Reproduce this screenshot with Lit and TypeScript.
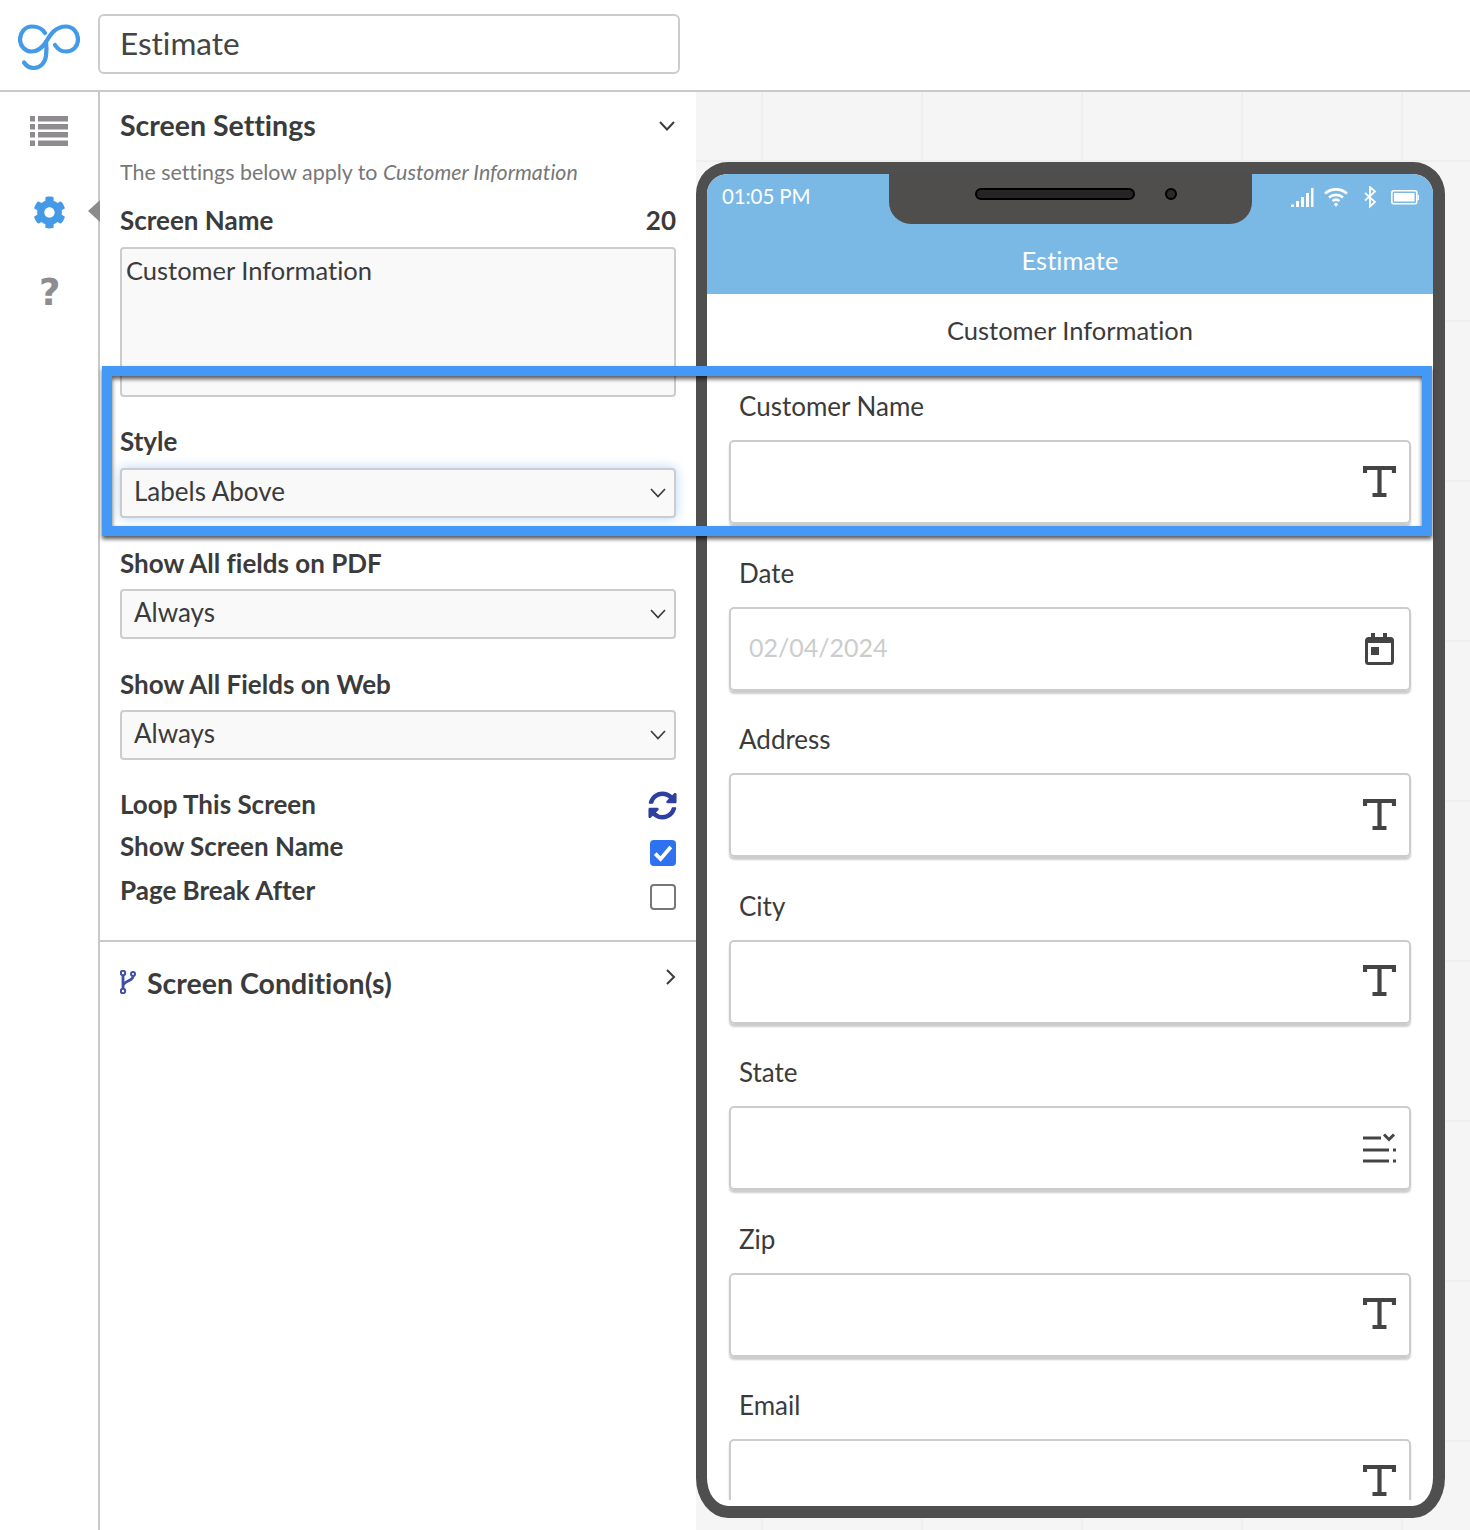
import { LitElement, html, css, svg } from "lit";
import { customElement } from "lit/decorators.js";

const tIcon = svg`<path d="M2 7V2a1.500 1.500 0 0 1 0 0H31V7M16.500 2V28.500M9.500 29H23.500" fill="none" stroke="#444" stroke-width="4.200"/>`;
const icons: Record<string, unknown> = {
  t: html`<svg class="fi" viewBox="0 0 33 33" width="33" height="33">${tIcon}</svg>`,
  date: html`<svg class="fi" viewBox="0 0 33 33" width="33" height="33">
    <path d="M3.500 8.500a2 2 0 0 1 2-2h22a2 2 0 0 1 2 2v21a2 2 0 0 1-2 2h-22a2 2 0 0 1-2-2z" fill="none" stroke="#444" stroke-width="3"/>
    <path d="M3.500 6h26v5h-26zM8 1h4v6H8zM20 1h4v6h-4zM8 15h8v8H8z" fill="#444"/></svg>`,
  list: html`<svg class="fi" viewBox="0 0 33 33" width="33" height="33">
    <path d="M0 6H18M0 18H26M0 29H26" fill="none" stroke="#444" stroke-width="3"/>
    <path d="M21 2.500l5 5 5-5" fill="none" stroke="#444" stroke-width="3"/>
    <path d="M30 16.500h3v3h-3zM30 27.500h3v3h-3z" fill="#444"/></svg>`,
};

const fields = [
  ["Customer Name", "t", ""],
  ["Date", "date", "02/04/2024"],
  ["Address", "t", ""],
  ["City", "t", ""],
  ["State", "list", ""],
  ["Zip", "t", ""],
  ["Email", "t", ""],
];

const chevronDown = html`<svg class="sel-chev" viewBox="0 0 16 10" width="16" height="10"><path d="M1 1l7 7.500L15 1" fill="none" stroke="#3c3c3c" stroke-width="1.700"/></svg>`;

@customElement("app-root")
export class AppRoot extends LitElement {
  static styles = css`
    :host { display: block; width: 1470px; height: 1530px; overflow: hidden; background: #fff; position: relative; font-family: Lato, "Liberation Sans", sans-serif; font-variant-ligatures: none; color: #3b3b3b; }
    * { box-sizing: border-box; }
    .top { height: 92px; border-bottom: 2px solid #c9c9c9; display: flex; align-items: flex-start; padding: 14px 0 0 18px; }
    .logo { width: 62px; height: 50px; margin: 8px 18px 0 0; flex: none; }
    .title-input { width: 582px; height: 60px; border: 2px solid #ccc; border-radius: 6px; padding-left: 20px; font-size: 31.500px; line-height: 54px; color: #444; }
    .main { display: flex; height: 1438px; }
    .rail { width: 100px; flex: none; border-right: 2px solid #c9c9c9; display: flex; flex-direction: column; align-items: flex-start; padding: 24px 0 0 30px; position: relative; }
    .rail-list { display: block; }
    .gear { display: block; margin: 50px 0 0 3px; }
    .help { font-family: "DejaVu Sans", sans-serif; font-weight: 700; font-size: 37px; line-height: 40px; color: #8e8c8e; margin: 44px 0 0 9px; }
    .caret { position: absolute; right: -2px; top: 108px; width: 0; height: 0; border-style: solid; border-width: 11px 12px 11px 0; border-color: transparent #8c8a8c transparent transparent; }
    .panel { width: 596px; flex: none; }
    .settings { padding: 16px 20px 34px; border-bottom: 2px solid #c9c9c9; }
    .row { display: flex; justify-content: space-between; align-items: center; }
    .h { height: 36px; font-size: 28.500px; font-weight: 700; line-height: 34px; padding-bottom: 2px; }
    .h svg { margin: 2px 1px 0 0; }
    .sub { height: 26px; line-height: 24px; margin-top: 16px; font-size: 21.400px; color: #777; }
    .lab { height: 30px; line-height: 30px; font-size: 26px; font-weight: 700; color: #3b3b3b; margin-top: 30px; }
    .lab.row { padding-bottom: 2px; line-height: 26px; }
    .lab.first { margin-top: 20px; }
    .lab.gap29 { margin-top: 29px; }
    .area { height: 150px; margin-top: 11px; background: #f9f9f9; border: 2px solid #ccc; border-radius: 4px; padding: 4px 4px; font-size: 25.500px; line-height: 34px; }
    .sel { height: 50px; margin-top: 11px; background: #f9f9f9; border: 2px solid #ccc; border-radius: 4px; padding: 0 8px 4px 12px; font-size: 26px; display: flex; align-items: center; justify-content: space-between; }
    .sel.focus { margin-top: 12px; box-shadow: 0 0 12px rgba(90,165,235,.45); }
    .sel-chev { display: block; margin-top: 4px; }
    .lab.tight { margin-top: 12px; }
    .lab.tight2 { margin-top: 14px; }
    .loop-ic { margin-right: -1px; margin-top: 3px; }
    .box { width: 26px; height: 26px; border-radius: 4px; margin-top: 14px; flex: none; }
    .box.on { background: #2f72f0; display: flex; align-items: center; justify-content: center; }
    .box.off { border: 2px solid #777; }
    .cond { height: 36px; margin-top: 23px; padding: 0 20px; display: flex; align-items: center; font-size: 28.500px; font-weight: 700; line-height: 34px; }
    .cond svg.branch { margin-right: 11px; flex: none; margin-top: -2px; }
    .cond svg.more { margin-left: auto; margin-top: -12px; }
    .canvas { flex: 1; background-color: #f5f5f5; padding-top: 70px;
      background-image: linear-gradient(90deg, #efefef 2px, transparent 2px), linear-gradient(#efefef 2px, transparent 2px);
      background-size: 160px 160px; background-position: 65px 68px; }
    .phone { width: 749px; height: 1356px; border: solid #4f4f4f; border-width: 12px 12px 12px 11px; border-radius: 32px 32px 32px 32px / 32px 32px 40px 40px; overflow: hidden; background: #fff; position: relative; display: flex; flex-direction: column; }
    .bar { height: 120px; flex: none; background: #7ab8e5; color: #fff; position: relative; text-align: center; font-size: 25.500px; padding-top: 68px; line-height: 36px; }
    .time { position: absolute; left: 15px; top: 7px; font-size: 20.500px; line-height: 30px; letter-spacing: -.1px; }
    .notch { position: absolute; left: 182px; top: 0; width: 363px; height: 50px; background: #4f4e4d; border-radius: 0 0 22px 22px; }
    .speaker { position: absolute; left: 86px; top: 14px; width: 160px; height: 12px; background: #262424; border: 2px solid #000; border-radius: 6px; }
    .cam { position: absolute; left: 276px; top: 14px; width: 12px; height: 12px; background: #2a2a2a; border: 2px solid #000; border-radius: 50%; }
    .status { position: absolute; left: 584px; top: 12px; }
    .body { height: 1206px; flex: none; overflow: hidden; padding: 20px 22px 0; }
    .sname { height: 34px; line-height: 32px; text-align: center; font-size: 25.500px; margin-bottom: 42px; }
    .flab { height: 34px; line-height: 33px; padding-left: 10px; font-size: 26px; margin-bottom: 16px; }
    .inp { height: 84px; margin-bottom: 32.500px; border: 2px solid #ccc; border-radius: 5px; box-shadow: 0 3px 2px rgba(0,0,0,.2); display: flex; align-items: center; justify-content: space-between; padding: 0 13px 0 18px; font-size: 25px; color: #ccc; }
    .val { margin-bottom: 4px; }
    .fi { display: block; margin-left: auto; }
    .hl { position: absolute; left: 102px; top: 366px; width: 1330px; height: 170px; border: 10px solid #4499f7; box-shadow: 0 3px 4px rgba(0,0,0,.65), inset 0 3px 4px rgba(0,0,0,.65); pointer-events: none; }
  `;

  render() {
    return html`
      <div class="top">
        <svg class="logo" viewBox="18 22 62 50" width="62" height="50" fill="none" stroke="#449ae6" stroke-width="4.200" stroke-linecap="round">
          <path d="M45 33C42 28 37 26.500 32 26.500 24.500 26.500 20 33 20 39.500 20 46 25 51.500 32 51.500 38 51.500 42 48 46 42 50 35 55 26.500 66 26.500 73 26.500 78 32.500 78 39.500 78 46.500 73 51.500 66 51.500 61 51.500 57.500 49 55 45"/>
          <path d="M46 42C47 48 46.500 52 46 56 45 63 40 68 34 68 29 68 26 65.500 24 62.500"/>
        </svg>
        <div class="title-input">Estimate</div>
      </div>
      <div class="main">
        <div class="rail">
          <svg class="rail-list" viewBox="0 0 38 30" width="38" height="30" fill="#8e8c8e">
            <path d="M0 0h5v5.500H0zM8 0h30v5.500H8zM0 8h5v5.500H0zM8 8h30v5.500H8zM0 16h5v5.500H0zM8 16h30v5.500H8zM0 24.500h5V30H0zM8 24.500h30V30H8z"/>
          </svg>
          <svg class="gear" viewBox="0 0 512 512" width="33" height="33" fill="#449ae6"><path d="M487.400 315.700l-42.600-24.600c4.300-23.200 4.300-47 0-70.200l42.600-24.600c4.900-2.800 7.100-8.600 5.500-14-11.100-35.600-30-67.800-54.700-94.600-3.800-4.100-10-5.100-14.800-2.300L380.800 110c-17.900-15.400-38.500-27.300-60.800-35.100V25.800c0-5.600-3.900-10.500-9.400-11.700-36.700-8.200-74.300-7.800-109.200 0-5.500 1.200-9.400 6.100-9.400 11.700V75c-22.200 7.900-42.800 19.800-60.800 35.100L88.700 85.500c-4.900-2.800-11-1.900-14.800 2.300-24.700 26.700-43.600 58.900-54.700 94.600-1.700 5.400.6 11.200 5.500 14L67.300 221c-4.300 23.200-4.300 47 0 70.200l-42.600 24.600c-4.900 2.800-7.100 8.600-5.500 14 11.100 35.600 30 67.800 54.700 94.600 3.800 4.100 10 5.100 14.800 2.300l42.600-24.600c17.900 15.400 38.500 27.300 60.800 35.100v49.200c0 5.600 3.900 10.500 9.400 11.700 36.700 8.200 74.300 7.800 109.200 0 5.500-1.200 9.400-6.100 9.400-11.700v-49.200c22.200-7.900 42.800-19.800 60.800-35.100l42.600 24.600c4.900 2.800 11 1.900 14.800-2.300 24.700-26.700 43.600-58.900 54.700-94.600 1.500-5.500-.7-11.300-5.600-14.100zM256 336c-44.100 0-80-35.900-80-80s35.900-80 80-80 80 35.900 80 80-35.900 80-80 80z"/></svg>
          <div class="help">?</div>
          <div class="caret"></div>
        </div>
        <div class="panel">
          <div class="settings">
            <div class="row h">Screen Settings
              <svg viewBox="0 0 16 10" width="16" height="10"><path d="M1 1l7 7.500L15 1" fill="none" stroke="#3c3c3c" stroke-width="2"/></svg>
            </div>
            <div class="sub">The settings below apply to <i>Customer Information</i></div>
            <div class="row lab first">Screen Name<span>20</span></div>
            <div class="area">Customer Information</div>
            <div class="lab gap29">Style</div>
            <div class="sel focus">Labels Above ${chevronDown}</div>
            <div class="lab">Show All fields on PDF</div>
            <div class="sel">Always ${chevronDown}</div>
            <div class="lab">Show All Fields on Web</div>
            <div class="sel">Always ${chevronDown}</div>
            <div class="row lab">Loop This Screen
              <svg class="loop-ic" viewBox="0 0 512 512" width="29" height="29" fill="#2f3f9f"><path d="M370.720 133.280C339.458 104.008 298.888 87.962 255.848 88c-77.458.068-144.328 53.178-162.791 126.850-1.344 5.363-6.122 9.150-11.651 9.150H24.103c-7.498 0-13.194-6.807-11.807-14.176C33.933 94.924 134.813 8 256 8c66.448 0 126.791 26.136 171.315 68.685L463.030 40.970C478.149 25.851 504 36.559 504 57.941V192c0 13.255-10.745 24-24 24H345.941c-21.382 0-32.090-25.851-16.971-40.971l41.750-41.749zM32 296h134.059c21.382 0 32.090 25.851 16.971 40.971l-41.750 41.750c31.262 29.273 71.835 45.319 114.876 45.280 77.418-.07 144.315-53.144 162.787-126.849 1.344-5.363 6.122-9.150 11.651-9.150h57.304c7.498 0 13.194 6.807 11.807 14.176C478.067 417.076 377.187 504 256 504c-66.448 0-126.791-26.136-171.315-68.685L48.970 471.030C33.851 486.149 8 475.441 8 454.059V320c0-13.255 10.745-24 24-24z"/></svg>
            </div>
            <div class="row lab tight">Show Screen Name
              <div class="box on"><svg viewBox="0 0 20 20" width="24" height="24"><path d="M3.500 10.500l4.500 4.500L16.500 5" fill="none" stroke="#fff" stroke-width="3.200"/></svg></div>
            </div>
            <div class="row lab tight2">Page Break After<div class="box off"></div></div>
          </div>
          <div class="cond">
            <svg class="branch" viewBox="0 0 16 24" width="16" height="24" fill="none" stroke="#3f4fa5" stroke-width="2"><circle cx="3" cy="3" r="2.200"/><circle cx="3" cy="21" r="2.200"/><circle cx="13" cy="4" r="2"/><path d="M3 5.500V18.500M13 6.500C13 11 3 11 3 16" stroke-width="2.800"/></svg>
            Screen Condition(s)
            <svg class="more" viewBox="0 0 10 16" width="10" height="16"><path d="M1 1l7 7-7 7" fill="none" stroke="#3c3c3c" stroke-width="2"/></svg>
          </div>
        </div>
        <div class="canvas">
          <div class="phone">
            <div class="bar">
              <div class="time">01:05 PM</div>
              <div class="notch"><div class="speaker"></div><div class="cam"></div></div>
              <svg class="status" viewBox="0 0 128 24" width="128" height="24">
                <path d="M0 18.500h3V21H0zM5 15h3v6H5zM10 11h3v10h-3zM15 7h3v14h-3zM20 2h2.500v19H20z" fill="#fff"/>
                <path d="M34 7.500c6.500-5.500 15.500-5.500 22 0M38 11.500c4-3.500 10-3.500 14 0M41.500 15c2-1.500 5-1.500 7 0" fill="none" stroke="#fff" stroke-width="2.600"/>
                <circle cx="45" cy="18.500" r="1.800" fill="#fff"/>
                <path d="M74 7l10 9-5 4.500V1l5 4.500-10 9" fill="none" stroke="#fff" stroke-width="1.800"/>
                <rect x="100.800" y="4.800" width="25" height="13" rx="2" fill="none" stroke="#fff" stroke-width="1.600"/>
                <rect x="103" y="7" width="20.500" height="8.500" fill="#fff"/><rect x="126.500" y="9" width="1.500" height="5" fill="#fff"/>
              </svg>
              Estimate
            </div>
            <div class="body">
              <div class="sname">Customer Information</div>
              ${fields.map(([l, ic, v]) => html`
                <div class="flab">${l}</div>
                <div class="inp">${v ? html`<span class="val">${v}</span>` : ""}${icons[ic]}</div>`)}
            </div>
          </div>
        </div>
      </div>
      <div class="hl"></div>
    `;
  }
}
